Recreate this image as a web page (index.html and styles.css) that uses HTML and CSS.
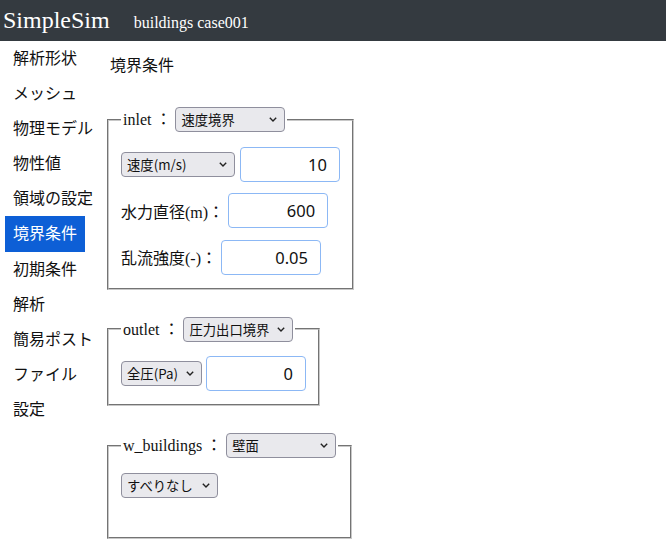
FILE: index.html
```html
<!DOCTYPE html>
<html lang="ja">
<head>
<meta charset="utf-8">
<title>SimpleSim</title>
<link rel="stylesheet" href="styles.css">
</head>
<body>
<header class="topbar">
  <span class="brand">SimpleSim</span>
  <span class="case">buildings case001</span>
</header>
<div class="layout">
  <nav class="sidebar">
    <a class="nav-item">解析形状</a>
    <a class="nav-item">メッシュ</a>
    <a class="nav-item">物理モデル</a>
    <a class="nav-item">物性値</a>
    <a class="nav-item">領域の設定</a>
    <a class="nav-item active">境界条件</a>
    <a class="nav-item">初期条件</a>
    <a class="nav-item">解析</a>
    <a class="nav-item">簡易ポスト</a>
    <a class="nav-item">ファイル</a>
    <a class="nav-item">設定</a>
  </nav>
  <main class="main">
    <div class="page-title">境界条件</div>

    <fieldset class="bc">
      <legend>inlet ： <span class="select w-legend"><span class="select-text">速度境界</span><svg class="chev" viewBox="0 0 8 5" width="8" height="5"><path d="M0.8 0.8 L4 4 L7.2 0.8" fill="none" stroke="#222" stroke-width="1.4"/></svg></span></legend>
      <div class="rows">
        <div class="row">
          <span class="select w-speed"><span class="select-text">速度(m/s)</span><svg class="chev" viewBox="0 0 8 5" width="8" height="5"><path d="M0.8 0.8 L4 4 L7.2 0.8" fill="none" stroke="#222" stroke-width="1.4"/></svg></span>
          <input class="num" type="text" value="10">
        </div>
        <div class="row">
          <label class="lbl">水力直径(m)：</label>
          <input class="num" type="text" value="600">
        </div>
        <div class="row">
          <label class="lbl">乱流強度(-)：</label>
          <input class="num" type="text" value="0.05">
        </div>
      </div>
    </fieldset>

    <fieldset class="bc">
      <legend>outlet ： <span class="select w-legend"><span class="select-text">圧力出口境界</span><svg class="chev" viewBox="0 0 8 5" width="8" height="5"><path d="M0.8 0.8 L4 4 L7.2 0.8" fill="none" stroke="#222" stroke-width="1.4"/></svg></span></legend>
      <div class="rows">
        <div class="row row-tight">
          <span class="select w-press"><span class="select-text">全圧(Pa)</span><svg class="chev" viewBox="0 0 8 5" width="8" height="5"><path d="M0.8 0.8 L4 4 L7.2 0.8" fill="none" stroke="#222" stroke-width="1.4"/></svg></span>
          <input class="num" type="text" value="0">
        </div>
      </div>
    </fieldset>

    <fieldset class="bc">
      <legend>w_buildings ： <span class="select w-legend"><span class="select-text">壁面</span><svg class="chev" viewBox="0 0 8 5" width="8" height="5"><path d="M0.8 0.8 L4 4 L7.2 0.8" fill="none" stroke="#222" stroke-width="1.4"/></svg></span></legend>
      <div class="rows rows-tall">
        <div class="row row-short">
          <span class="select w-slip"><span class="select-text">すべりなし</span><svg class="chev" viewBox="0 0 8 5" width="8" height="5"><path d="M0.8 0.8 L4 4 L7.2 0.8" fill="none" stroke="#222" stroke-width="1.4"/></svg></span>
        </div>
      </div>
    </fieldset>
  </main>
</div>
</body>
</html>
```

FILE: styles.css
```css
html, body {
  margin: 0;
  padding: 0;
  background: #fff;
}
body {
  font-family: "Liberation Serif", "Noto Sans CJK JP", serif;
  font-size: 16px;
  color: #212529;
}

.topbar {
  height: 41px;
  background: #343a40;
  color: #fff;
  display: flex;
  align-items: baseline;
  padding: 0 0 0 3px;
  box-sizing: border-box;
  line-height: 41px;
}
.brand {
  font-size: 24px;
  line-height: 41px;
}
.case {
  font-size: 16px;
  margin-left: 24px;
}

.layout {
  display: flex;
  align-items: flex-start;
}

.sidebar {
  width: 95px;
  padding-left: 5px;
  display: flex;
  flex-direction: column;
  align-items: flex-start;
}
.nav-item {
  display: block;
  box-sizing: border-box;
  padding: 0 8px 2px;
  height: 35.1px;
  line-height: 33px;
  font-family: "Noto Sans CJK JP", sans-serif;
  font-size: 16px;
  color: #111;
  white-space: nowrap;
}
.nav-item.active {
  background: #0d5fd6;
  color: #fff;
}

.main {
  padding-top: 11px;
  flex: 1;
}
.page-title {
  font-family: "Noto Sans CJK JP", sans-serif;
  font-size: 16px;
  line-height: 24px;
  margin-left: 10px;
  margin-bottom: 31px;
  color: #111;
}

.bc {
  width: fit-content;
  margin: 0 0 27px 7px;
  padding: 5.6px 12px 10px;
  border: 2px groove #c8c8c8;
  min-width: 0;
}
.bc legend {
  padding: 0 2px;
  font-size: 16px;
  line-height: 25px;
  white-space: nowrap;
  color: #111;
  display: flex;
  align-items: center;
  gap: 4px;
}

.rows {
  padding: 9px 0 3px;
  display: flex;
  flex-direction: column;
  gap: 11.5px;
}
.rows-tall {
  padding-bottom: 29px;
}
.row {
  display: flex;
  align-items: center;
  gap: 5px;
  height: 35px;
}
.row-tight {
  gap: 4px;
}
.row-short {
  height: 25px;
}

.select {
  box-sizing: border-box;
  height: 25px;
  display: inline-flex;
  align-items: center;
  justify-content: space-between;
  padding: 0 7px 0 5px;
  background: #e9e9ed;
  border: 1px solid #8f8f9d;
  border-radius: 4px;
  font-family: "Noto Sans CJK JP", sans-serif;
  font-size: 13.33px;
  color: #111;
  white-space: nowrap;
}
.select-text {
  line-height: 23px;
}
.chev {
  flex: none;
  margin-left: 6px;
}
.w-legend { width: 110px; }
.w-speed { width: 114px; }
.w-press { width: 81px; }
.w-slip { width: 97px; }

.lbl {
  font-size: 16px;
  white-space: nowrap;
  color: #111;
  margin-right: -1px;
}

.num {
  box-sizing: border-box;
  width: 100px;
  height: 35px;
  border: 1px solid #8cb8f5;
  border-radius: 4px;
  padding: 0 12px 0 6px;
  text-align: right;
  font-family: "Noto Sans", "Noto Sans CJK JP", sans-serif;
  font-size: 16.5px;
  color: #111;
  background: #fff;
  outline: none;
}
```
